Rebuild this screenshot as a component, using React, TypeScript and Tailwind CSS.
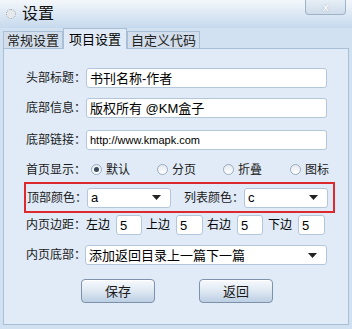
import React, { useState } from 'react';

const font = { fontFamily: '"Liberation Sans", "Noto Sans CJK SC", sans-serif' };

const Field: React.FC<{ value: string; className?: string }> = ({ value, className }) => (
    <div className={`h-[20px] bg-white border border-[#b4c6da] rounded-[3px] flex items-center px-[3px] text-[13px] text-black leading-none whitespace-nowrap ${className ?? ''}`}>
        {value}
    </div>
);

const Select: React.FC<{ value: string; className?: string }> = ({ value, className }) => (
    <div className={`h-[20px] bg-white border border-[#b4c6da] rounded-[3px] flex items-center justify-between pl-[3px] pr-[9px] text-[13px] text-black leading-none whitespace-nowrap ${className ?? ''}`}>
        <span>{value}</span>
        <svg width="9" height="5" viewBox="0 0 9 5"><path d="M0 0h9L4.5 5z" fill="#222" /></svg>
    </div>
);

const Label: React.FC<{ text: string }> = ({ text }) => (
    <span className="w-[60px] shrink-0 text-[12px] text-[#1a1a1a] leading-none whitespace-nowrap">{text}</span>
);

const Radio: React.FC<{ label: string; checked?: boolean; className?: string }> = ({ label, checked, className }) => (
    <div className={`flex items-center gap-[4px] shrink-0 ${className ?? ''}`}>
        <span className="w-[11px] h-[11px] shrink-0 rounded-full border border-[#9aabbf] bg-gradient-to-b from-[#e4e9ef] to-white flex items-center justify-center">
            {checked && <span className="w-[5px] h-[5px] rounded-full bg-[#3b4a5c]" />}
        </span>
        <span className="text-[12px] leading-none text-[#1a1a1a] whitespace-nowrap">{label}</span>
    </div>
);

const Button: React.FC<{ text: string }> = ({ text }) => (
    <button className="w-[74px] h-[24px] rounded-[4px] border border-[#7d91a8] bg-gradient-to-b from-[#f7fafd] via-[#dfe8f2] to-[#bccfe3] text-[13px] text-[#1a1a1a] leading-none shadow-[inset_0_1px_0_#ffffff]">
        {text}
    </button>
);

export default function App() {
    const [tab] = useState(1);
    const tabs = ['常规设置', '项目设置', '自定义代码'];

    return (
        <div style={font} className="w-[352px] h-[329px] bg-[#d2e1f1] flex flex-col overflow-hidden">
            <div className="h-[28px] bg-gradient-to-b from-[#f3f7fb] to-[#c6d9ed] flex items-start justify-between">
                <div className="flex items-center gap-[6px] pl-[6px] pt-[6px]">
                    <span className="w-[10px] h-[10px] rounded-full border border-dotted border-[#9aa4ae] bg-[#e6e9ec]" />
                    <span className="text-[16px] leading-none text-[#111]">设置</span>
                </div>
                <div className="mr-[6px] w-[41px] h-[15px] rounded-b-[4px] border border-t-0 border-[#9fb3c8] bg-gradient-to-b from-[#e6eef6] to-[#cfdcea] flex items-center justify-center">
                    <span className="text-[11px] font-bold leading-none text-white [text-shadow:0_0_1px_#7b8ea3]">x</span>
                </div>
            </div>
            <div className="h-[20px] flex items-end pl-[3px]">
                {tabs.map((t, i) => (
                    <div
                        key={t}
                        className={
                            i === tab
                                ? 'h-[21px] px-[5px] bg-[#e0ebf7] border border-b-0 border-[#a9bfd6] flex items-center text-[13px] leading-none text-black -mb-px relative z-10'
                                : 'h-[17px] px-[3px] bg-[#d2deeb] border border-b-0 border-[#a9bfd6] flex items-center text-[13px] leading-none text-[#222]'
                        }
                    >
                        {t}
                    </div>
                ))}
            </div>
            <div className="mx-[3px] h-[277px] bg-[#e0ebf7] border border-[#a9bfd6] flex flex-col pl-[22px] pr-[21px]">
                <div className="mt-[19px] flex items-center">
                    <Label text="头部标题：" />
                    <Field value="书刊名称-作者" className="flex-1" />
                </div>
                <div className="mt-[10px] flex items-center">
                    <Label text="底部信息：" />
                    <Field value="版权所有 @KM盒子" className="flex-1" />
                </div>
                <div className="mt-[12px] flex items-center">
                    <Label text="底部链接：" />
                    <Field value="http://www.kmapk.com" className="flex-1 !text-[11px]" />
                </div>
                <div className="mt-[11px] flex items-center h-[17px]">
                    <Label text="首页显示：" />
                    <Radio label="默认" checked className="ml-[5px]" />
                    <Radio label="分页" className="ml-[27px]" />
                    <Radio label="折叠" className="ml-[27px]" />
                    <Radio label="图标" className="ml-[28px]" />
                </div>
                <div className="mt-[4px] -ml-[2px] -mr-[8px] h-[31px] border-2 border-[#dc2a2e] flex items-center pl-[1px]">
                    <Label text="顶部颜色：" />
                    <Select value="a" className="w-[84px]" />
                    <span className="ml-[13px] w-[60px] text-[12px] leading-none text-[#1a1a1a] whitespace-nowrap">列表颜色：</span>
                    <Select value="c" className="w-[84px]" />
                </div>
                <div className="mt-[2px] flex items-center">
                    <Label text="内页边距：" />
                    <span className="text-[12px] leading-none">左边</span>
                    <Field value="5" className="ml-[6px] w-[26px]" />
                    <span className="ml-[4px] text-[12px] leading-none">上边</span>
                    <Field value="5" className="ml-[6px] w-[27px]" />
                    <span className="ml-[4px] text-[12px] leading-none">右边</span>
                    <Field value="5" className="ml-[6px] w-[26px]" />
                    <span className="ml-[5px] text-[12px] leading-none">下边</span>
                    <Field value="5" className="ml-[6px] w-[27px]" />
                </div>
                <div className="mt-[10px] flex items-center">
                    <Label text="内页底部：" />
                    <Select value="添加返回目录上一篇下一篇" className="flex-1 -ml-[1px]" />
                </div>
                <div className="mt-[14px] flex items-center pl-[55px] gap-[44px]">
                    <Button text="保存" />
                    <Button text="返回" />
                </div>
            </div>
        </div>
    );
}
